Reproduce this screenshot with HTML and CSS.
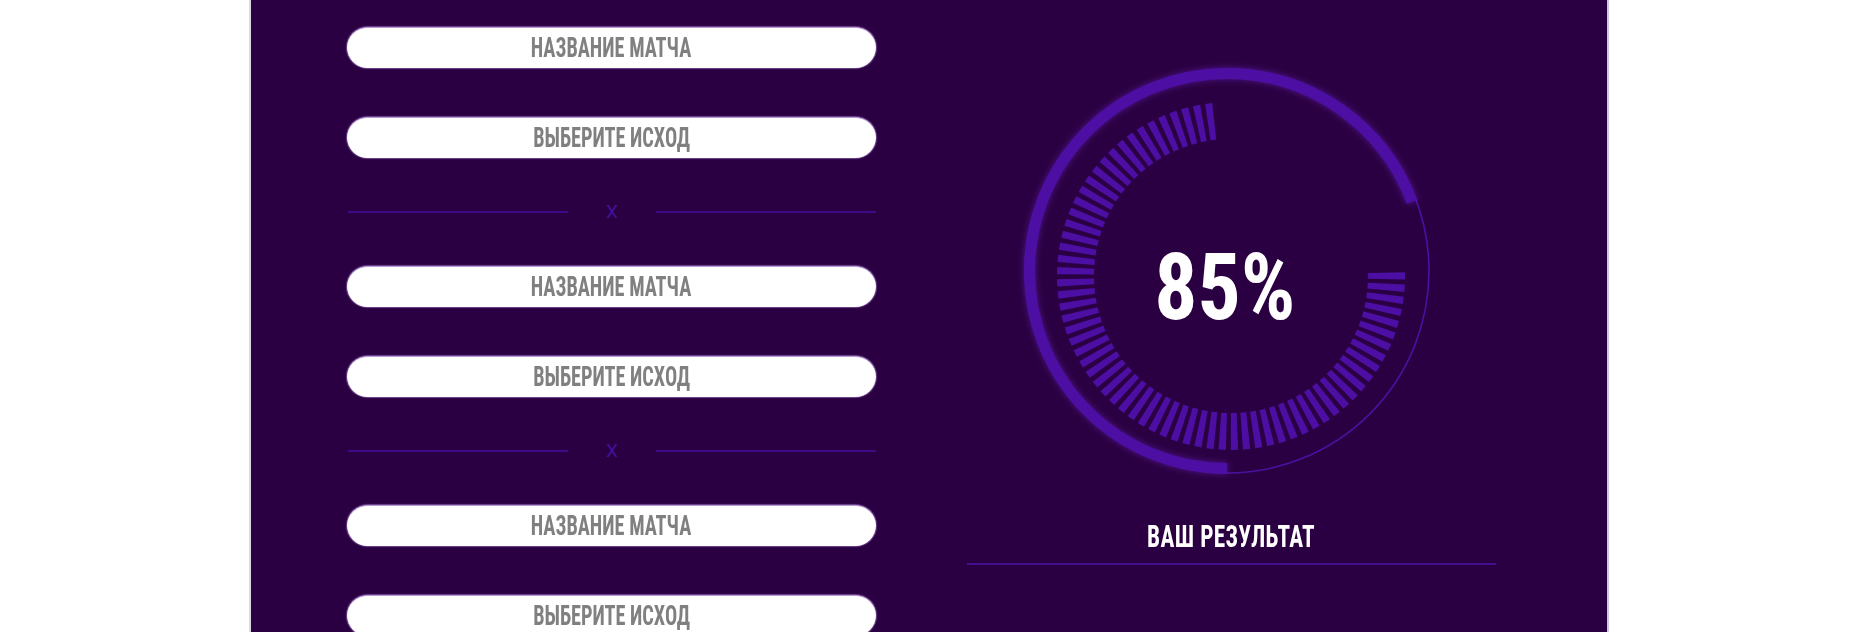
FILE: index.html
```html
<!DOCTYPE html>
<html lang="ru">
<head>
<meta charset="utf-8">
<title>Прогноз</title>
<link rel="stylesheet" href="styles.css">
</head>
<body>
<div class="panel">
  <div class="matches">
    <div class="match">
      <div class="pill"><span class="narrow">НАЗВАНИЕ МАТЧА</span></div>
      <div class="pill"><span class="narrow">ВЫБЕРИТЕ ИСХОД</span></div>
    </div>
    <div class="sep"><span class="sep-line"></span><span class="sep-x">X</span><span class="sep-line"></span></div>
    <div class="match">
      <div class="pill"><span class="narrow">НАЗВАНИЕ МАТЧА</span></div>
      <div class="pill"><span class="narrow">ВЫБЕРИТЕ ИСХОД</span></div>
    </div>
    <div class="sep"><span class="sep-line"></span><span class="sep-x">X</span><span class="sep-line"></span></div>
    <div class="match">
      <div class="pill"><span class="narrow">НАЗВАНИЕ МАТЧА</span></div>
      <div class="pill"><span class="narrow">ВЫБЕРИТЕ ИСХОД</span></div>
    </div>
  </div>
  <div class="result">
    <div class="gauge">
      <svg class="gauge-svg" width="460" height="440" viewBox="0 0 460 440">
        <circle class="ring-thin" cx="225" cy="220" r="202" fill="none"/>
        <circle class="ring-thick" cx="225" cy="220" r="197.5" fill="none" pathLength="360" stroke-dasharray="249.5 110.5" transform="rotate(90 225 220)"/>
        <path class="ticks" d="M 384.47 221.72 A 155.5 155.5 0 1 1 212.23 70.41" fill="none" pathLength="265.02" stroke-dasharray="2.42 1.62"/>
      </svg>
      <span class="gauge-value"><span class="narrow-num">85%</span></span>
    </div>
    <div class="result-label"><span class="narrow">ВАШ РЕЗУЛЬТАТ</span></div>
    <div class="result-line"></div>
  </div>
</div>
</body>
</html>
```

FILE: styles.css
```css
* { box-sizing: border-box; }
html, body { margin: 0; padding: 0; background: #ffffff; }
body { font-family: "Roboto", "Open Sans", sans-serif; }

.panel {
  width: 1360px;
  height: 632px;
  margin: 0 auto;
  background: #2b0042;
  border-left: 2px solid #dcd8de;
  border-right: 2px solid #cfc6d6;
  display: grid;
  grid-template-columns: 529px 529px;
  column-gap: 91px;
  padding-left: 96px;
  overflow: hidden;
}

.narrow {
  display: inline-block;
  white-space: nowrap;
  transform: scaleX(0.75);
}

.matches {
  display: flex;
  flex-direction: column;
  padding-top: 27px;
}
.match {
  display: flex;
  flex-direction: column;
  gap: 49px;
}
.pill {
  height: 41px;
  border-radius: 21px;
  background: #ffffff;
  border-top: 1px solid #b89ad6;
  box-shadow: 0 0 1px 1px rgba(170, 130, 210, 0.55);
  color: #808080;
  font-family: "Roboto", "Open Sans", sans-serif;
  font-stretch: 75%;
  font-weight: 700;
  font-size: 27px;
  line-height: 30px;
  display: flex;
  align-items: center;
  justify-content: center;
}
.sep {
  display: flex;
  align-items: center;
  height: 14px;
  margin: 47px 0 47px 1px;
}
.sep-line {
  width: 222px;
  height: 2px;
  background: #3d0a88;
}
.sep-x {
  width: 88px;
  text-align: center;
  color: #43109a;
  font-family: "Roboto", sans-serif;
  font-size: 19px;
  font-weight: 400;
  line-height: 14px;
}

.result {
  display: flex;
  flex-direction: column;
  align-items: center;
  padding-top: 51px;
}
.gauge {
  position: relative;
  width: 460px;
  height: 440px;
}
.gauge-svg { display: block; }
.ring-thin { stroke: #4b10a0; stroke-width: 1.6; }
.ring-thick { stroke: #4d0ea3; stroke-width: 11; filter: drop-shadow(0 0 3px rgba(110, 40, 210, 0.55)); }
.ticks { stroke: #4d0ea3; stroke-width: 37; }
.gauge-value {
  position: absolute;
  left: 0;
  right: 0;
  top: 191px;
  text-align: center;
  color: #ffffff;
  font-family: "Roboto", "Open Sans", sans-serif;
  font-stretch: 75%;
  font-weight: 700;
  font-size: 92px;
  line-height: 92px;
  padding-right: 14px;
}
.narrow-num {
  display: inline-block;
  transform: scaleX(0.93);
}
.result-label {
  margin-top: 29px;
  color: #ffffff;
  font-family: "Roboto", "Open Sans", sans-serif;
  font-stretch: 75%;
  font-weight: 700;
  font-size: 31px;
  letter-spacing: 0.5px;
  line-height: 34px;
}
.result-line {
  margin-top: 9px;
  width: 529px;
  height: 2px;
  background: #40108e;
}
```
